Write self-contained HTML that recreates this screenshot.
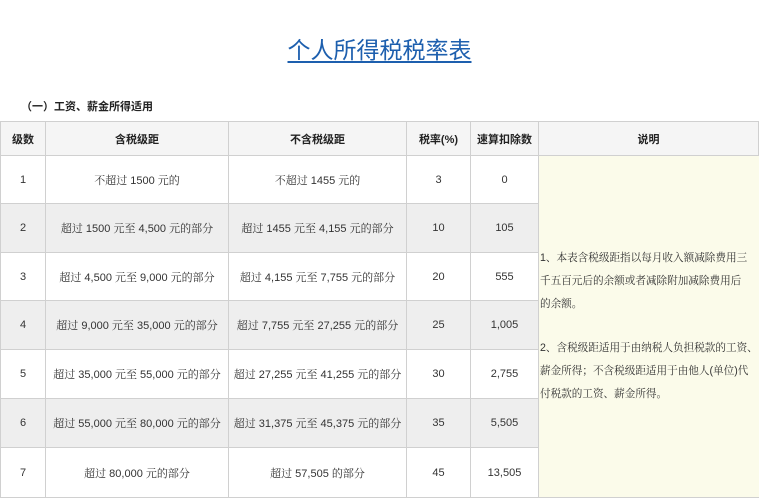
<!DOCTYPE html>
<html><head><meta charset="utf-8"><style>
body{margin:0;width:759px;height:500px;background:#fff;position:relative;overflow:hidden;font-family:"Liberation Sans","Noto Sans CJK SC",sans-serif;}
.t{position:absolute;left:0;width:759px;top:31px;text-align:center;font-size:23px;color:#1d5fae;}
.t span{text-decoration:underline;text-underline-offset:3px;}
.s{position:absolute;left:21px;top:98px;font-size:11px;font-weight:bold;color:#222;}
.c{position:absolute;box-sizing:border-box;border-right:1px solid #d0d0d0;border-bottom:1px solid #d0d0d0;display:flex;align-items:center;justify-content:center;font-size:11px;color:#333;font-family:"Liberation Sans","Noto Serif CJK SC",serif;}
.h{background:#f5f5f5;font-weight:bold;font-family:"Liberation Sans","Noto Sans CJK SC",sans-serif;color:#222;}
.g{background:#eeeeee;}
.e{position:absolute;left:539px;top:156px;width:220px;height:341px;background:#fbfbea;border-bottom:1px solid #d0d0d0;}
.l{position:absolute;left:540px;font-size:10.6px;color:#333;font-family:"Liberation Sans","Noto Serif CJK SC",serif;white-space:nowrap;}
</style></head><body>
<div class="t"><span>个人所得税税率表</span></div>
<div class="s">（一）工资、薪金所得适用</div>
<div style="position:absolute;left:0;top:121px;width:759px;height:1px;background:#d0d0d0"></div>
<div style="position:absolute;left:0;top:121px;width:1px;height:377px;background:#d0d0d0"></div>
<div id="g"></div>
<div class="e"></div>
<div class="l" style="top:250px">1、本表含税级距指以每月收入额减除费用三</div>
<div class="l" style="top:273px">千五百元后的余额或者减除附加减除费用后</div>
<div class="l" style="top:296px">的余额。</div>
<div class="l" style="top:340px">2、含税级距适用于由纳税人负担税款的工资、</div>
<div class="l" style="top:363px">薪金所得；不含税级距适用于由他人(单位)代</div>
<div class="l" style="top:386px">付税款的工资、薪金所得。</div>
<script>
var xs=[1,46,229,407,471,539,759];
var ys=[122,156,204,253,301,350,399,448,498];
var rows=[
["级数","含税级距","不含税级距","税率(%)","速算扣除数","说明"],
["1","不超过 1500 元的","不超过 1455 元的","3","0"],
["2","超过 1500 元至 4,500 元的部分","超过 1455 元至 4,155 元的部分","10","105"],
["3","超过 4,500 元至 9,000 元的部分","超过 4,155 元至 7,755 元的部分","20","555"],
["4","超过 9,000 元至 35,000 元的部分","超过 7,755 元至 27,255 元的部分","25","1,005"],
["5","超过 35,000 元至 55,000 元的部分","超过 27,255 元至 41,255 元的部分","30","2,755"],
["6","超过 55,000 元至 80,000 元的部分","超过 31,375 元至 45,375 元的部分","35","5,505"],
["7","超过 80,000 元的部分","超过 57,505 的部分","45","13,505"]];
var h="";
for(var r=0;r<rows.length;r++){for(var c=0;c<rows[r].length;c++){
var cls="c"+(r==0?" h":(r%2==0?" g":""));
h+='<div class="'+cls+'" style="left:'+xs[c]+'px;top:'+ys[r]+'px;width:'+(xs[c+1]-xs[c])+'px;height:'+(ys[r+1]-ys[r])+'px">'+rows[r][c]+'</div>';}}
document.getElementById("g").outerHTML=h;
</script>
</body></html>
